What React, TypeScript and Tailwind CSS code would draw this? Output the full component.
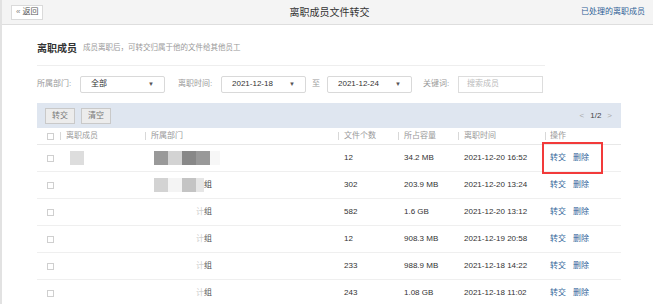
const rows = [
  { n: "12", size: "34.2 MB", time: "2021-12-20 16:52" },
  { n: "302", size: "203.9 MB", time: "2021-12-20 13:24" },
  { n: "582", size: "1.6 GB", time: "2021-12-20 13:12" },
  { n: "12", size: "908.3 MB", time: "2021-12-19 20:58" },
  { n: "233", size: "988.9 MB", time: "2021-12-18 14:22" },
  { n: "243", size: "1.08 GB", time: "2021-12-18 11:02" },
];

function Select({ value, w }: { value: string; w: string }) {
  return (
    <div className={`${w} h-[17px] border border-[#d9d9d9] rounded-[2px] bg-white flex items-center justify-between px-[10px] text-[8px] text-[#333]`}>
      <span>{value}</span>
      <span className="text-[6px] text-[#555]">▼</span>
    </div>
  );
}

function Box() {
  return <div className="w-[7px] h-[7px] border border-[#cfcfcf] bg-white" />;
}

export default function App() {
  return (
    <div className="w-[653px] h-[304px] overflow-hidden bg-white border-l-2 border-[#e2e2e2] relative" style={{ fontFamily: '"Liberation Sans","Noto Sans CJK SC",sans-serif' }}>
      {/* top bar */}
      <div className="h-[25px] bg-[#f4f4f4] border-b border-[#dedede] flex items-center justify-between pl-[9px] pr-[8px] relative">
        <div className="h-[15px] px-[4px] border border-[#dadada] bg-white flex items-center text-[8px] text-[#555] gap-[2px]">
          <span className="text-[8px] text-[#888]">«</span>返回
        </div>
        <div className="absolute left-0 right-0 text-center text-[10px] text-[#333] pointer-events-none pl-[4px]">离职成员文件转交</div>
        <div className="text-[8px] text-[#2f5f96]">已处理的离职成员</div>
      </div>

      <div className="pl-[35px] w-[619px]">
        {/* heading */}
        <div className="flex items-center gap-[6px] h-[41px] pt-[6px] w-[508px] border-b border-[#eeeeee]">
          <span className="text-[10px] font-bold text-[#333]">离职成员</span>
          <span className="text-[7.5px] text-[#999]">成员离职后，可转交归属于他的文件给其他员工</span>
        </div>

        {/* filters */}
        <div className="flex items-center h-[35px] pt-[1px] text-[8px] text-[#999]">
          <span className="w-[43px]">所属部门:</span>
          <Select value="全部" w="w-[85px]" />
          <span className="ml-[13px] w-[43px]">离职时间:</span>
          <Select value="2021-12-18" w="w-[85px]" />
          <span className="ml-[6px] mr-[7px]">至</span>
          <Select value="2021-12-24" w="w-[85px]" />
          <span className="ml-[11px] w-[35px]">关键词:</span>
          <div className="w-[85px] h-[17px] border border-[#dddddd] bg-white flex items-center px-[8px] text-[#bbb]">搜索成员</div>
        </div>

        {/* toolbar */}
        <div className="mt-[2px] h-[25px] bg-[#dfe6f0] flex items-center justify-between px-[8px]">
          <div className="flex gap-[6px]">
            <div className="h-[16px] px-[6px] bg-[#ececec] border border-[#c9c9c9] flex items-center text-[8px] text-[#777]">转交</div>
            <div className="h-[16px] px-[6px] bg-[#ececec] border border-[#c9c9c9] flex items-center text-[8px] text-[#777]">清空</div>
          </div>
          <div className="flex items-center gap-[6px] text-[8px] pr-[1px]">
            <span className="text-[#aaa]">&lt;</span>
            <span className="text-[#444]">1/2</span>
            <span className="text-[#aaa]">&gt;</span>
          </div>
        </div>

        {/* table header */}
        <div className="h-[17px] flex items-center text-[8px] text-[#999] border-b border-[#e8e8e8]">
          <div className="w-[23px] pl-[10px]"><Box /></div>
          <div className="w-[85px] pl-[5px] border-l border-[#d8d8d8] leading-[8px]">离职成员</div>
          <div className="w-[193px] pl-[5px] border-l border-[#d8d8d8] leading-[8px]">所属部门</div>
          <div className="w-[60px] pl-[5px] border-l border-[#d8d8d8] leading-[8px]">文件个数</div>
          <div className="w-[60px] pl-[5px] border-l border-[#d8d8d8] leading-[8px]">所占容量</div>
          <div className="w-[87px] pl-[5px] border-l border-[#d8d8d8] leading-[8px]">离职时间</div>
          <div className="pl-[4px] border-l border-[#d8d8d8] leading-[8px]">操作</div>
        </div>

        {rows.map((r, i) => (
          <div key={i} className="h-[27px] flex items-center text-[8px] text-[#333] border-b border-[#efefef]">
            <div className="w-[23px] pl-[10px]"><Box /></div>
            <div className="w-[85px] pl-[10px]">
              {i === 0 && <div className="w-[14px] h-[14px] bg-[#dddddd]" />}
            </div>
            <div className="w-[193px] pl-[9px] flex items-center">
              {i === 0 && (
                <>
                  <div className="w-[14px] h-[14px] bg-[#999]" />
                  <div className="w-[14px] h-[14px] bg-[#d3d3d3]" />
                  <div className="w-[14px] h-[14px] bg-[#888]" />
                  <div className="w-[14px] h-[14px] bg-[#999]" />
                  <div className="w-[10px] h-[14px] bg-[#f7f7f7]" />
                </>
              )}
              {i === 1 && (
                <>
                  <div className="w-[14px] h-[14px] bg-[#d3d3d3]" />
                  <div className="w-[14px] h-[14px] bg-[#f4f4f4]" />
                  <div className="w-[14px] h-[14px] bg-[#c4c4c4]" />
                  <div className="w-[8px] h-[14px] bg-[#e6e6e6]" />
                  <span className="text-[#444]">组</span>
                </>
              )}
              {i > 1 && (
                <>
                  <div className="w-[42px]" />
                  <span className="text-[#cfcfcf]">计</span>
                  <span className="text-[#555]">组</span>
                </>
              )}
            </div>
            <div className="w-[60px] pl-[6px]">{r.n}</div>
            <div className="w-[60px] pl-[6px]">{r.size}</div>
            <div className="w-[87px] pl-[6px]">{r.time}</div>
            <div className="flex gap-[7px] pl-[5px] text-[#2f6499]">
              <span>转交</span>
              <span>删除</span>
            </div>
          </div>
        ))}
      </div>

      {/* highlight box */}
      <div className="absolute left-[540px] top-[142px] w-[61px] h-[32px] border-2 border-[#f23a3a]" />
    </div>
  );
}
